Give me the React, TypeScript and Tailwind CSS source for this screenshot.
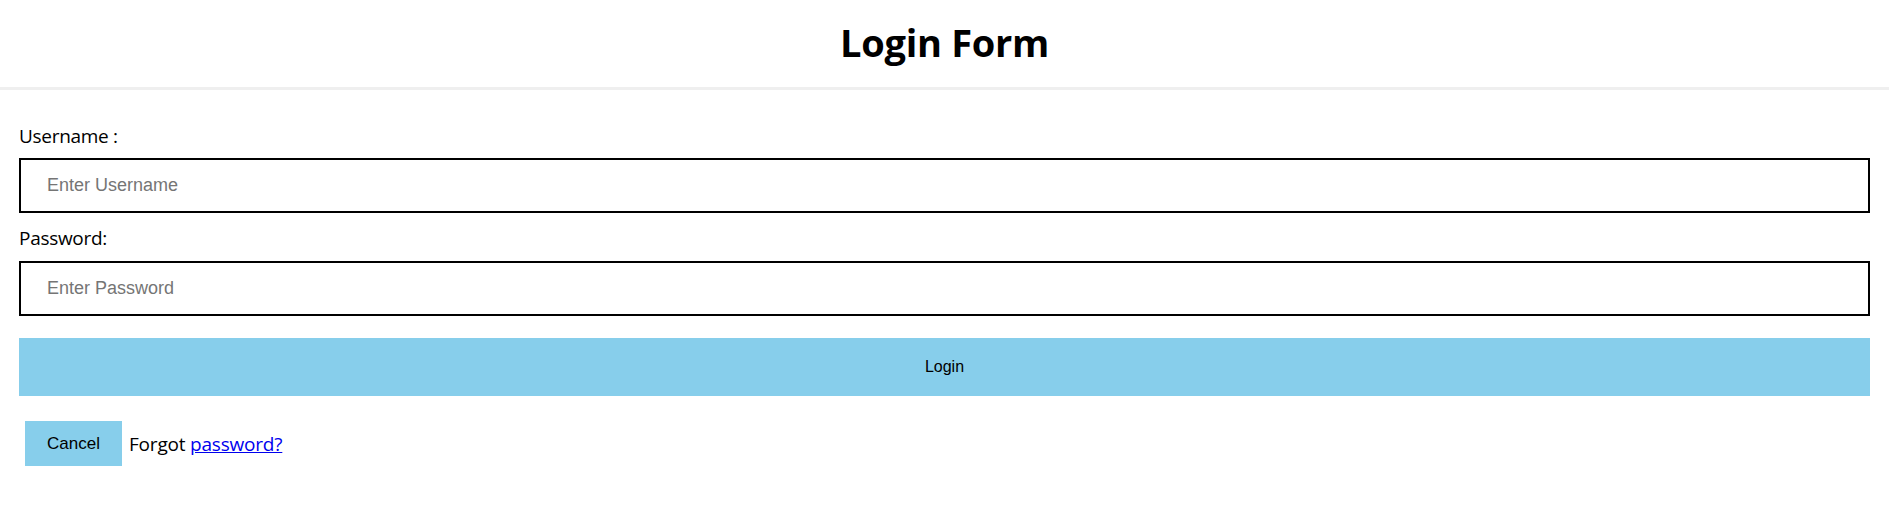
import React from "react";

export default function App() {
  const ui = { fontFamily: '"Open Sans", "Noto Sans", sans-serif' };
  const arial = { fontFamily: '"Liberation Sans", Arial, sans-serif' };
  return (
    <div className="w-full min-h-[508px] bg-white text-black" style={ui}>
      <header className="h-[90px] flex items-center justify-center border-b-[3px] border-[#efefef]">
        <h1 className="text-[38px] font-bold leading-none tracking-[-0.3px] -mt-[3px]">Login Form</h1>
      </header>
      <form className="px-[19px] pt-[31px] flex flex-col" onSubmit={(e) => e.preventDefault()}>
        <label className="pt-[2px] h-[28px] text-[19px] leading-[26px] tracking-[-0.3px]">Username :</label>
        <input
          className="mt-[9px] h-[55px] border-2 border-black px-[26px] text-[18px] placeholder-[#757575] outline-none"
          style={arial}
          placeholder="Enter Username"
        />
        <label className="mt-[11px] pt-[1px] h-[27px] text-[19px] leading-[26px] tracking-[-0.3px]">Password:</label>
        <input
          type="password"
          className="mt-[10px] h-[55px] border-2 border-black px-[26px] text-[18px] placeholder-[#757575] outline-none"
          style={arial}
          placeholder="Enter Password"
        />
        <button
          type="submit"
          className="mt-[22px] h-[58px] bg-[#87ceeb] text-[16px] text-black"
          style={arial}
        >
          Login
        </button>
        <div className="mt-[25px] flex items-center">
          <button
            type="button"
            className="ml-[6px] w-[97px] h-[45px] bg-[#87ceeb] text-[17px] text-black"
            style={arial}
          >
            Cancel
          </button>
          <span className="ml-[7px] text-[19px] leading-[26px] tracking-[-0.2px]">
            Forgot <a href="#" className="text-[#0000ee] underline">password?</a>
          </span>
        </div>
      </form>
    </div>
  );
}
